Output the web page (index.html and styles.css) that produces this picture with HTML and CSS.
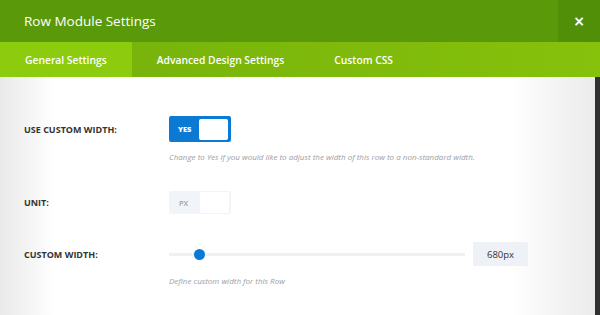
FILE: index.html
```html
<!DOCTYPE html>
<html lang="en">
<head>
    <meta charset="UTF-8">
    <meta name="viewport" content="width=device-width, initial-scale=1.0">
    <title>Row Module Settings</title>
    <link rel="stylesheet" href="styles.css">
</head>
<body>
    <div class="modal">
        <div class="modal-header">
            <h1 class="modal-title">Row Module Settings</h1>
            <button class="modal-close">&times;</button>
        </div>
        <div class="tabs">
            <span class="tab active">General Settings</span>
            <span class="tab">Advanced Design Settings</span>
            <span class="tab">Custom CSS</span>
        </div>
        <div class="modal-body">
            <div class="field">
                <label class="field-label">Use Custom Width:</label>
                <div class="toggle on">
                    <span class="toggle-text">Yes</span>
                    <span class="toggle-knob"></span>
                </div>
                <p class="field-desc">Change to Yes if you would like to adjust the width of this row to a non-standard width.</p>
            </div>
            <div class="field">
                <label class="field-label">Unit:</label>
                <div class="toggle">
                    <span class="toggle-text">PX</span>
                    <span class="toggle-knob"></span>
                </div>
            </div>
            <div class="field">
                <label class="field-label">Custom Width:</label>
                <div class="range">
                    <div class="range-track">
                        <span class="range-thumb"></span>
                    </div>
                    <input class="range-value" type="text" value="680px">
                </div>
                <p class="field-desc">Define custom width for this Row</p>
            </div>
        </div>
    </div>
</body>
</html>
```

FILE: styles.css
```css
body {
    margin: 0;
    font-family: "Open Sans", "Noto Sans", sans-serif;
    background-color: #fff;
}

.modal {
    display: flex;
    flex-direction: column;
    width: 600px;
    height: 315px;
    overflow: hidden;
}

.modal-header {
    display: flex;
    align-items: center;
    height: 42px;
    background-color: #5a990a;
}

.modal-title {
    flex: 1;
    margin: 0 0 0 24px;
    font-size: 13.5px;
    font-weight: 400;
    color: #fff;
}

.modal-close {
    width: 42px;
    height: 42px;
    padding: 0;
    border: none;
    background-color: #528f09;
    color: #fff;
    font-family: "DejaVu Sans", sans-serif;
    font-size: 14px;
    font-weight: bold;
}

.tabs {
    display: flex;
    height: 36px;
    background: linear-gradient(to right, #74b00b, #86c10c);
}

.tab {
    display: flex;
    align-items: center;
    padding: 0 25px;
    font-size: 10.3px;
    font-weight: 600;
    color: #fff;
}

.tab.active {
    background-color: #8ccb0d;
}

.modal-body {
    flex: 1;
    padding: 39px 0 0 24px;
    background:
        linear-gradient(to right, #e9e9e9, #fff 55px, #fff 510px, #ebebeb 595px, #303030 595px);
}

.field {
    display: grid;
    grid-template-columns: 145px auto;
    align-items: center;
    justify-content: start;
    margin-bottom: 28px;
}

.field-label {
    font-size: 9px;
    font-weight: 700;
    text-transform: uppercase;
    color: #333;
}

.field-desc {
    grid-column: 2;
    margin: 9px 0 0;
    font-size: 8px;
    font-style: italic;
    line-height: 12px;
    color: #9a9ea6;
}

.toggle {
    display: flex;
    align-items: center;
    justify-content: space-between;
    box-sizing: border-box;
    width: 62px;
    height: 23px;
    padding: 1px 2px 1px 10px;
    background-color: #f1f4f8;
    border-radius: 2px;
}

.toggle.on {
    height: 26px;
    padding: 2px 3px 2px 9px;
    background-color: #0c7ad3;
}

.toggle-text {
    font-size: 7.5px;
    font-weight: 600;
    text-transform: uppercase;
    color: #a0a3a8;
}

.toggle.on .toggle-text {
    font-weight: 800;
    color: #fff;
}

.toggle-knob {
    width: 29px;
    height: 21px;
    background-color: #fff;
    border-radius: 2px;
}

.range {
    display: flex;
    align-items: center;
    gap: 8px;
}

.range-track {
    position: relative;
    width: 296px;
    height: 3px;
    background-color: #eef0f3;
}

.range-thumb {
    position: absolute;
    left: 25px;
    top: -4px;
    width: 11px;
    height: 11px;
    border-radius: 50%;
    background-color: #0c7ad3;
}

.range-value {
    box-sizing: border-box;
    width: 55px;
    height: 24px;
    border: none;
    background-color: #eef1f5;
    font-family: "Open Sans", sans-serif;
    font-size: 9.5px;
    color: #333;
    text-align: center;
}
```
